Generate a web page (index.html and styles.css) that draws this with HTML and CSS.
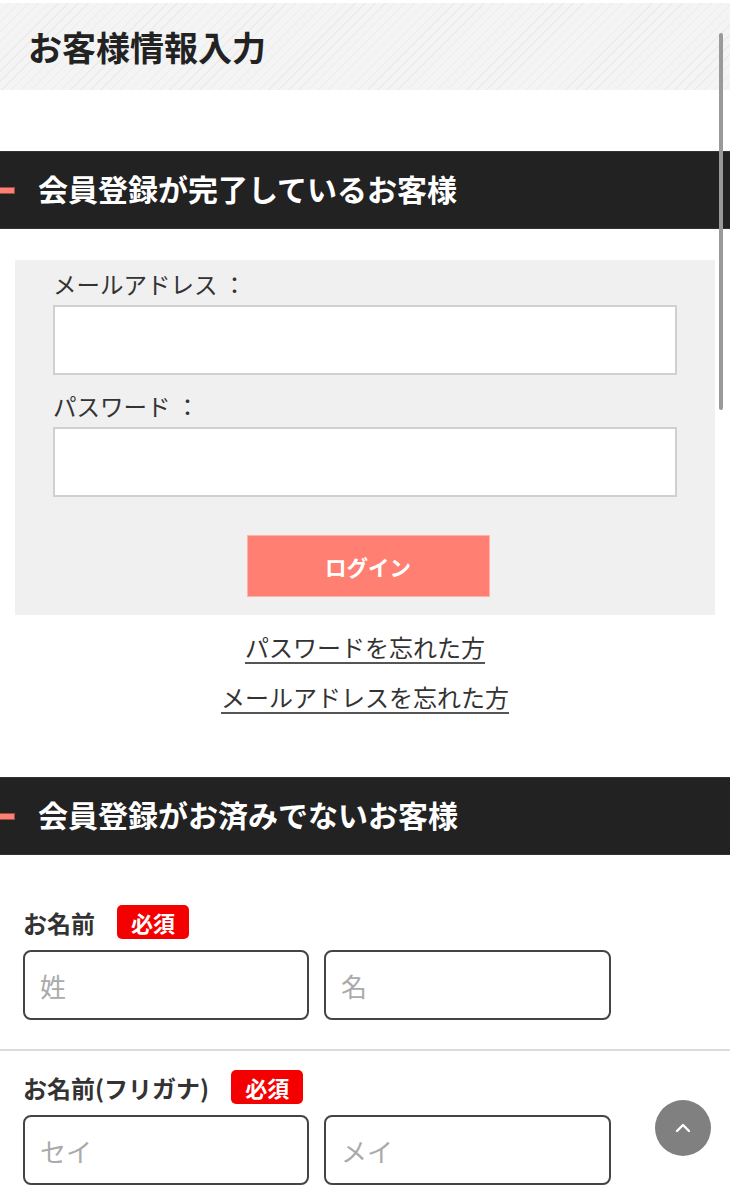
FILE: index.html
```html
<!DOCTYPE html>
<html lang="ja">
<head>
<meta charset="utf-8">
<title>お客様情報入力</title>
<link rel="stylesheet" href="styles.css">
</head>
<body>
  <header class="page-title">
    <h1>お客様情報入力</h1>
  </header>

  <section class="member">
    <h2 class="section-head">会員登録が完了しているお客様</h2>
    <form class="login-box">
      <label class="login-label" for="email">メールアドレス ：</label>
      <input class="login-input" id="email" type="text">
      <label class="login-label pw" for="password">パスワード ：</label>
      <input class="login-input" id="password" type="password">
      <div class="login-actions">
        <button class="login-btn" type="button">ログイン</button>
      </div>
    </form>
    <div class="forgot-links">
      <a href="#">パスワードを忘れた方</a>
      <a href="#">メールアドレスを忘れた方</a>
    </div>
  </section>

  <section class="guest">
    <h2 class="section-head">会員登録がお済みでないお客様</h2>
    <div class="field">
      <div class="field-label">
        <span>お名前</span>
        <span class="required">必須</span>
      </div>
      <div class="field-inputs">
        <input class="text-input" type="text" placeholder="姓">
        <input class="text-input" type="text" placeholder="名">
      </div>
    </div>
    <div class="field">
      <div class="field-label">
        <span>お名前(フリガナ)</span>
        <span class="required">必須</span>
      </div>
      <div class="field-inputs">
        <input class="text-input" type="text" placeholder="セイ">
        <input class="text-input" type="text" placeholder="メイ">
      </div>
    </div>
  </section>

  <div class="scroll-thumb"></div>
  <a class="to-top" href="#">
    <svg width="20" height="20" viewBox="0 0 20 20"><path d="M4 13 L10 7 L16 13" fill="none" stroke="#fff" stroke-width="2.4" stroke-linecap="round" stroke-linejoin="round"/></svg>
  </a>
</body>
</html>
```

FILE: styles.css
```css
* { box-sizing: border-box; }

html, body {
  margin: 0;
  padding: 0;
  background: #fff;
  color: #333;
  font-family: "Noto Sans CJK JP", "Noto Sans", sans-serif;
}

/* page heading band with faint diagonal stripes */
.page-title {
  margin-top: 3px;
  height: 87px;
  display: flex;
  align-items: center;
  padding-left: 28px;
  background-color: #f4f4f4;
  background-image: repeating-linear-gradient(135deg, #f4f4f4 0, #f4f4f4 6px, #ebebeb 6px, #ebebeb 7px);
}
.page-title h1 {
  margin: 0;
  font-size: 34px;
  line-height: 40px;
  font-weight: 700;
  color: #222;
}

/* dark section bars */
.section-head {
  margin: 61px 0 0;
  height: 78px;
  display: flex;
  align-items: center;
  gap: 24px;
  padding-bottom: 4px;
  background: #222;
  color: #fff;
  font-size: 30px;
  line-height: 40px;
  font-weight: 700;
  border-top: 1px solid #333;
  border-bottom: 1px solid #333;
}
.section-head::before {
  content: "";
  width: 14px;
  height: 5px;
  margin-top: 4px;
  background: #ff7f72;
  box-shadow: 0 0 0 1px #9a4a44;
}

/* login form */
.login-box {
  margin: 31px 15px 0;
  padding: 8px 38px 18px;
  background: #f0f0f0;
  display: flex;
  flex-direction: column;
}
.login-label {
  font-size: 23.5px;
  line-height: 32px;
  color: #333;
}
.login-input {
  margin-top: 5px;
  height: 70px;
  border: 2px solid #d0d0d0;
  background: #fff;
  font-size: 20px;
}
.login-label.pw { margin-top: 15px; }
.login-actions {
  margin-top: 38px;
  display: flex;
  justify-content: center;
  padding-left: 6px;
}
.login-btn {
  width: 243px;
  height: 62px;
  background: #ff7f72;
  border: 1px solid #ffb3ab;
  color: #fff;
  font-family: inherit;
  font-size: 21.5px;
  font-weight: 700;
}

.forgot-links {
  margin-top: 14px;
  padding-bottom: 1px;
  display: flex;
  flex-direction: column;
  align-items: center;
  gap: 14px;
}
.forgot-links a {
  font-size: 24px;
  line-height: 36px;
  color: #333;
  text-decoration: underline;
  text-decoration-thickness: 2px;
  text-underline-offset: 5px;
  text-decoration-color: #555;
}

/* guest registration form */
.field {
  padding: 50px 23px 29px;
}
.field + .field {
  border-top: 2px solid #dcdcdc;
  padding-top: 19px;
}
.field-label {
  display: flex;
  align-items: center;
  gap: 22px;
  height: 34px;
  font-size: 24px;
  font-weight: 700;
  color: #333;
}
.required {
  display: inline-flex;
  align-items: center;
  height: 34px;
  padding: 0 14px;
  background: #f40000;
  border-radius: 5px;
  color: #fff;
  font-size: 22px;
  font-weight: 700;
}
.field-inputs {
  margin-top: 11px;
  display: flex;
  gap: 15px;
}
.text-input {
  width: 287px;
  height: 70px;
  border: 2px solid #444;
  border-radius: 8px;
  padding: 0 15px;
  font-family: inherit;
  font-size: 26px;
  background: #fff;
}
.text-input:first-child { width: 286px; }
.text-input::placeholder { color: #aaa; }

/* overlay scrollbar thumb */
.scroll-thumb {
  position: fixed;
  top: 33px;
  left: 719px;
  width: 4px;
  height: 377px;
  border-radius: 2px;
  background: #9a9a9a;
}

/* back-to-top button */
.to-top {
  position: fixed;
  left: 655px;
  top: 1100px;
  width: 56px;
  height: 56px;
  border-radius: 50%;
  background: #808080;
  display: flex;
  align-items: center;
  justify-content: center;
}
```
